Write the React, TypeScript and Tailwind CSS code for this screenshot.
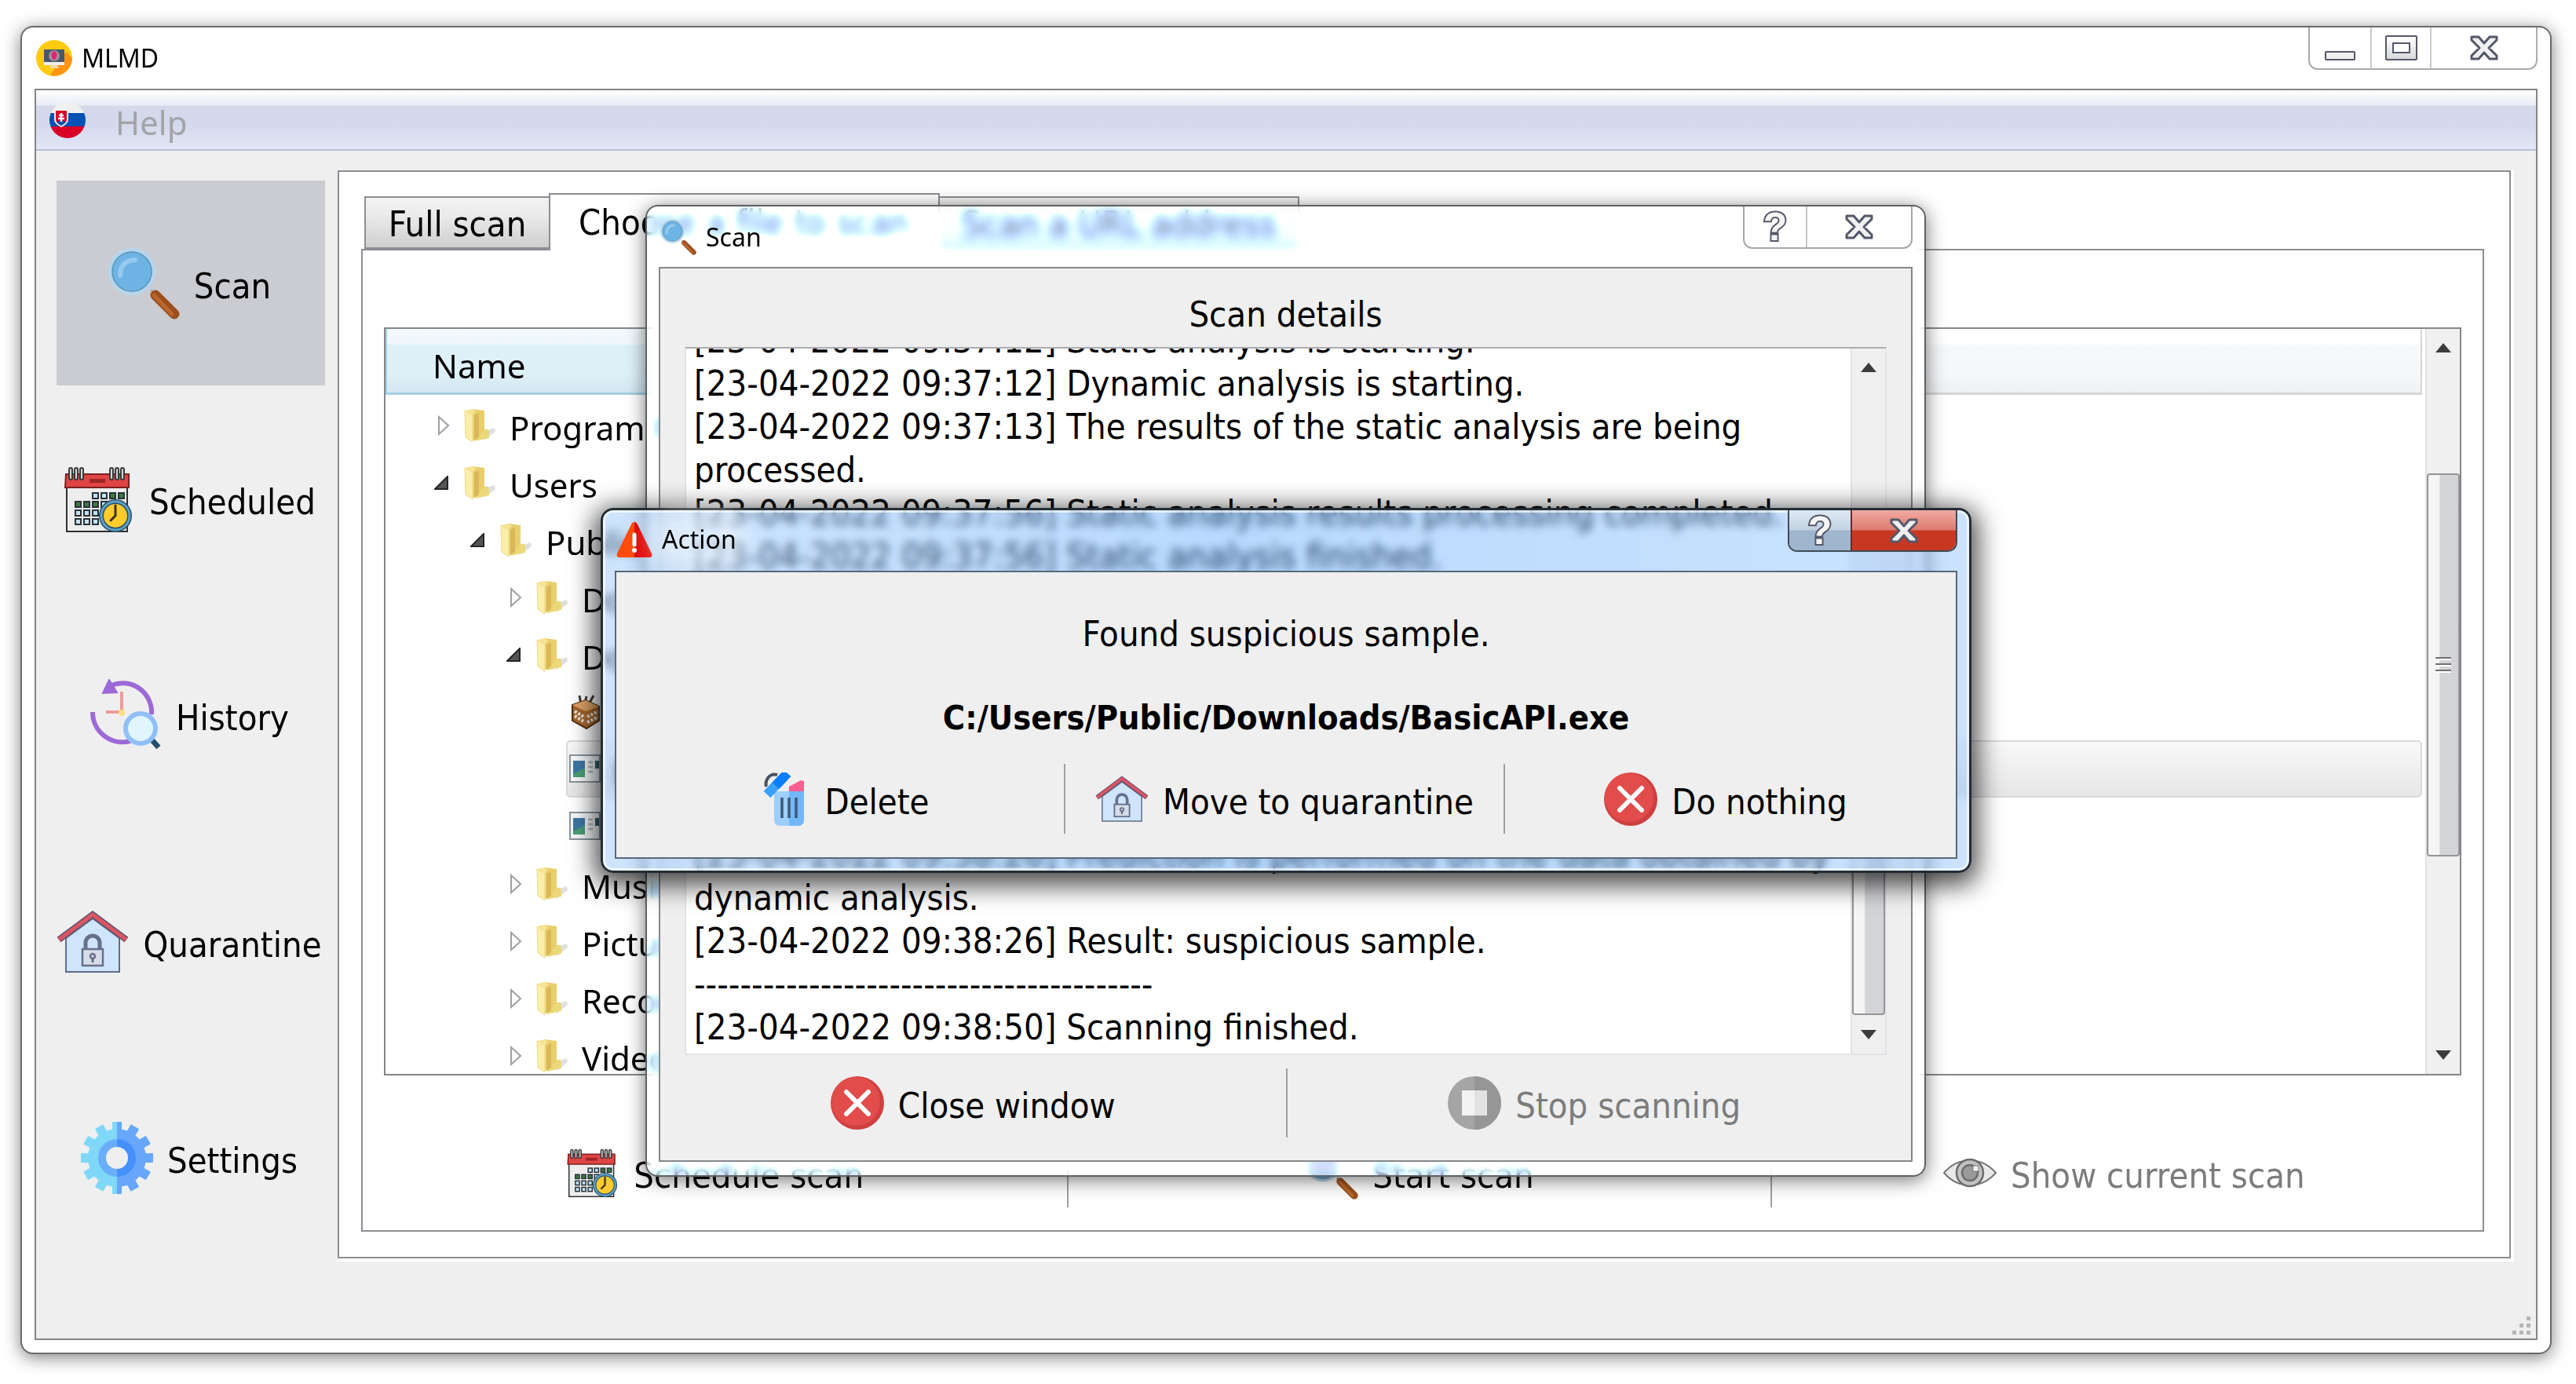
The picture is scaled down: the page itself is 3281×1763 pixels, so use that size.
import type { ReactNode } from 'react'
import clsx from 'clsx'

const TAHOMA = "font-['DejaVu_Sans_Condensed','Noto_Sans',sans-serif]"
const SEGOE = "font-['Noto_Sans','Open_Sans',sans-serif]"

type IconProps = { className?: string }

function MagnifierIcon({ className }: IconProps) {
  return (
    <svg viewBox="0 0 92 92" className={className} aria-hidden="true">
      <path d="M55 54l8 9" stroke="#a9b7c2" strokeWidth="4" />
      <path d="M61 61l24 24" stroke="#9c4f1c" strokeWidth="13" strokeLinecap="round" />
      <path d="M59 61l23 24" stroke="#b8682f" strokeWidth="5" strokeLinecap="round" />
      <circle cx="31" cy="31" r="28" fill="#6db4e4" stroke="#b7d6ea" strokeWidth="5" />
      <circle cx="31" cy="31" r="25" fill="none" stroke="#5d93b8" strokeWidth="1.5" />
      <path d="M16 36c0-12 6-19 19-20" stroke="#96c9ee" strokeWidth="6" fill="none" strokeLinecap="round" />
    </svg>
  )
}

function CalendarIcon({ className }: IconProps) {
  const cells = [
    [38, 38], [49, 38], [60, 38], [71, 38],
    [16, 49], [27, 49], [38, 49], [49, 49],
    [16, 60], [27, 60], [38, 60],
    [16, 71], [27, 71], [38, 71],
  ]
  return (
    <svg viewBox="0 0 92 92" className={className} aria-hidden="true">
      <rect x="5" y="24" width="77" height="63" fill="#ededed" stroke="#2e3032" strokeWidth="2" />
      <path d="M4 14h80v17H3z" fill="#e04545" stroke="#7d2020" strokeWidth="2" />
      <rect x="34" y="20" width="20" height="5" fill="#9d2626" />
      {[8, 15, 22, 60, 67, 74].map((x) => (
        <rect key={x} x={x} y="6" width="4" height="15" rx="2" fill="#d5d5d5" stroke="#3a3a3a" strokeWidth="2" />
      ))}
      {cells.map(([x, y], i) => (
        <rect
          key={i}
          x={x}
          y={y}
          width="7"
          height="7"
          fill={i === 2 || i === 3 || (i > 3 && i < 7) ? '#3f7a3f' : '#c4e3f5'}
          stroke="#27323a"
          strokeWidth="2"
        />
      ))}
      <circle cx="67" cy="67" r="18" fill="#ffcb2d" stroke="#274f66" strokeWidth="6" />
      <circle cx="67" cy="67" r="18" fill="none" stroke="#5da2c6" strokeWidth="3" />
      <path d="M67 54v13l-6 6" stroke="#3b3220" strokeWidth="3" fill="none" strokeLinecap="round" />
    </svg>
  )
}

function HistoryIcon({ className }: IconProps) {
  return (
    <svg viewBox="0 0 92 92" className={className} aria-hidden="true">
      <path d="M4 42a38 38 0 0 0 48 37" stroke="#9c69d6" strokeWidth="6" fill="none" />
      <path d="M28 8a37 37 0 0 1 51 37" stroke="#9c69d6" strokeWidth="6" fill="none" />
      <path d="M25 1l10 16-18 1z" fill="#9c69d6" stroke="#9c69d6" strokeWidth="2" />
      <path d="M41 16v26H21" stroke="#ef9a9a" strokeWidth="4" fill="none" />
      <circle cx="41" cy="43" r="4" fill="#ffe082" />
      <path d="M78 76l10 11" stroke="#24506e" strokeWidth="7" />
      <circle cx="65" cy="63" r="19" fill="#e1f5fe" stroke="#90bff9" strokeWidth="6" />
    </svg>
  )
}

function HouseLockIcon({ className }: IconProps) {
  return (
    <svg viewBox="0 0 92 92" className={className} aria-hidden="true">
      <path d="M12 41L46 16l34 25v43H12z" fill="#cfe5fc" stroke="#5f6c8c" strokeWidth="2" />
      <path d="M3 43L46 11l43 32" fill="none" stroke="#5f5573" strokeWidth="8" />
      <path d="M3 43L46 11l43 32" fill="none" stroke="#dd5562" strokeWidth="5" />
      <path d="M37 56V47a9 9 0 0 1 18 0v9" fill="none" stroke="#66708c" strokeWidth="5" />
      <rect x="33" y="55" width="26" height="21" fill="#d7dde6" stroke="#66708c" strokeWidth="2.5" />
      <circle cx="46" cy="64" r="3" fill="none" stroke="#66708c" strokeWidth="2.5" />
      <path d="M46 66v6" stroke="#66708c" strokeWidth="3" />
    </svg>
  )
}

function GearIcon({ className }: IconProps) {
  const teeth = [0, 30, 60, 90, 120, 150]
  return (
    <svg viewBox="0 0 92 92" className={className} aria-hidden="true">
      <defs>
        <clipPath id="gear-left"><path d="M0 0h46v92H0z" /></clipPath>
        <clipPath id="gear-right"><path d="M46 0h46v92H46z" /></clipPath>
      </defs>
      {[
        { clip: 'url(#gear-left)', outer: '#80d8f8', ring: '#6aaefb' },
        { clip: 'url(#gear-right)', outer: '#66a6fb', ring: '#4590fb' },
      ].map(({ clip, outer, ring }) => (
        <g key={clip} clipPath={clip}>
          {teeth.map((angle) => (
            <rect key={angle} x="40" y="0" width="12" height="92" rx="1" fill={outer} transform={`rotate(${angle} 46 46)`} />
          ))}
          <circle cx="46" cy="46" r="37" fill={outer} />
          <circle cx="46" cy="46" r="24" fill={ring} />
        </g>
      ))}
      <circle cx="46" cy="46" r="14" fill="#efefef" />
    </svg>
  )
}

function CrossIcon({ className }: IconProps) {
  return (
    <svg viewBox="0 0 68 68" className={className} aria-hidden="true">
      <circle cx="34" cy="34" r="34" fill="#d03f40" />
      <circle cx="32" cy="32" r="31" fill="#e24c4b" />
      <path d="M20 20l28 28M48 20L20 48" stroke="#fff" strokeWidth="6" strokeLinecap="round" />
    </svg>
  )
}

function StopIcon({ className }: IconProps) {
  return (
    <svg viewBox="0 0 68 68" className={className} aria-hidden="true">
      <circle cx="34" cy="34" r="34" fill="#a5a5a5" />
      <path d="M34 0a34 34 0 0 1 0 68z" fill="#969696" />
      <path d="M18 18h16v32H18z" fill="#f3f3f3" />
      <path d="M34 18h16v32H34z" fill="#e2e2e2" />
    </svg>
  )
}

function TrashIcon({ className }: IconProps) {
  return (
    <svg viewBox="0 0 68 68" className={className} aria-hidden="true">
      <path d="M41 24V18l15-8 4 1v14z" fill="#ff5d93" />
      <path d="M22 24h38v37a7 7 0 0 1-7 7H29a7 7 0 0 1-7-7z" fill="#9dcffd" />
      <path d="M41 24h19v37a7 7 0 0 1-7 7H41z" fill="#73b7fb" />
      <path d="M32 32v26M41 32v26M50 32v26" stroke="#3d5a75" strokeWidth="3.5" />
      <path d="M12 18c-2-8 4-18 14-15" fill="none" stroke="#47535e" strokeWidth="4" />
      <path d="M13 28L35 5" stroke="#3ba0fb" strokeWidth="12" />
      <path d="M24 17L39 1" stroke="#0a7dfa" strokeWidth="12" />
    </svg>
  )
}

function EyeIcon({ className }: IconProps) {
  return (
    <svg viewBox="0 0 68 68" className={className} aria-hidden="true">
      <path d="M1 34c18-21 48-21 66 0-18 21-48 21-66 0z" fill="#e9e9e9" stroke="#777" strokeWidth="2" />
      <circle cx="34" cy="34" r="17" fill="#c2c2c2" stroke="#6d6d6d" strokeWidth="2.5" />
      <circle cx="34" cy="34" r="10" fill="#9a9a9a" stroke="#6d6d6d" strokeWidth="2.5" />
      <rect x="38" y="25" width="7" height="7" fill="#f5f5f5" stroke="#777" />
    </svg>
  )
}

function WarningIcon({ className }: IconProps) {
  return (
    <svg viewBox="0 0 46 46" className={className} aria-hidden="true">
      <path d="M23 1c2 0 3 1 4 3l18 37c1 3 0 5-3 5H23z" fill="#e00b0b" />
      <path d="M23 1c-2 0-3 1-4 3L1 41c-1 3 0 5 3 5h19z" fill="#ff4b0a" />
      <path d="M23 17v13" stroke="#fff" strokeWidth="5" strokeLinecap="round" />
      <circle cx="23" cy="37" r="3" fill="#fff" />
    </svg>
  )
}

function AppLogo({ className }: IconProps) {
  return (
    <svg viewBox="0 0 46 46" className={className} aria-hidden="true">
      <circle cx="23" cy="23" r="23" fill="#ffcb0c" />
      <path d="M46 23a23 23 0 0 1-28 22l20-30z" fill="#ff9510" />
      <rect x="10" y="12" width="26" height="16" fill="#46586b" />
      <rect x="10" y="28" width="26" height="4" fill="#f2efe9" />
      <path d="M19 32h8l2 4H17z" fill="#f5d9a0" />
      <ellipse cx="23" cy="20" rx="7" ry="7" fill="#9f8f96" />
      <path d="M23 14c5 1 4 9 0 12-4-3-5-11 0-12z" fill="#e8217d" />
    </svg>
  )
}

function SlovakFlag({ className }: IconProps) {
  return (
    <svg viewBox="0 0 46 46" className={className} aria-hidden="true">
      <defs><clipPath id="flag"><circle cx="23" cy="23" r="23" /></clipPath></defs>
      <g clipPath="url(#flag)">
        <path d="M0 0h46v14H0z" fill="#f0f0f0" />
        <path d="M0 14h46v17H0z" fill="#0052b4" />
        <path d="M0 31h46v15H0z" fill="#d80027" />
        <path d="M6 11h18v11c0 5-5 8-9 10-4-2-9-5-9-10z" fill="#f0f0f0" />
        <path d="M8 11h14v11c0 4-4 6-7 8-3-2-7-4-7-8z" fill="#d80027" />
        <path d="M9 26c2-3 10-3 12 0l-6 4z" fill="#0052b4" />
        <path d="M15 14v11M11 21h8M12 17h6" stroke="#f0f0f0" strokeWidth="2.5" />
      </g>
    </svg>
  )
}

function FolderIcon() {
  return (
    <svg viewBox="0 0 44 44" className="size-11" aria-hidden="true">
      <path d="M24 30l17-5 1 5-14 11z" fill="#000" opacity=".12" />
      <path d="M13 1l15 2v34l-15 4z" fill="#e9cf6c" />
      <path d="M28 27c5-1 6 1 6 5v6l-19 4z" fill="#ecd878" />
      <path d="M3 3l10 6v34L4 37z" fill="#fbedaa" stroke="#eedb88" />
      <path d="M3 3l10-2 4 3-4 5z" fill="#f6e394" />
      <path d="M15 9l6-3v31l-6 4z" fill="#cfa94a" opacity=".6" />
    </svg>
  )
}

function ProgramIcon() {
  return (
    <svg viewBox="0 0 44 44" className="size-11" aria-hidden="true">
      <rect x="5" y="4" width="38" height="34" fill="#f7f9fa" stroke="#8b959c" strokeWidth="2" />
      <rect x="9" y="11" width="15" height="21" fill="#4aa079" />
      <path d="M9 11h15v9L9 28z" fill="#3e78a8" />
      <path d="M28 13h6M28 19h6M28 25h6" stroke="#b8bec2" strokeWidth="3" />
      <path d="M37 11h5v10h-5z" fill="#35626f" />
    </svg>
  )
}

function PackageIcon() {
  return (
    <svg viewBox="0 0 44 44" className="size-11" aria-hidden="true">
      <path d="M19 12L17 1M24 10l2-8M30 10l5-9" stroke="#3e3a36" strokeWidth="3" />
      <path d="M8 13l17-6 17 8v18L26 43 8 33z" fill="#a5672d" stroke="#4d3014" strokeWidth="2" />
      <path d="M8 13l17 8 17-6-17-8z" fill="#e0a368" />
      <path d="M11 21l13 8M11 27l13 8M27 28l14-7M27 35l14-7" stroke="#e8e3dc" strokeWidth="4" strokeDasharray="3 2" />
    </svg>
  )
}

function CloseGlyph() {
  return (
    <svg viewBox="0 0 36 32" className="h-8 w-9" aria-hidden="true">
      <path
        d="M2 2h9l7 8 7-8h9v4L24 16l10 10v4h-9l-7-8-7 8H2v-4l10-10L2 6z"
        fill="#f0f0f1"
        stroke="#55586a"
        strokeWidth="3"
        strokeLinejoin="round"
      />
    </svg>
  )
}

function Arrow({ down = false }: { down?: boolean }) {
  return (
    <svg viewBox="0 0 20 12" className="h-3 w-5" aria-hidden="true">
      <path d={down ? 'M0 0h20L10 12z' : 'M10 0l10 12H0z'} fill="#3c3c3c" />
    </svg>
  )
}

function ScrollBar({ thumbClass, grip = false }: { thumbClass: string; grip?: boolean }) {
  return (
    <div className="flex w-11 shrink-0 flex-col items-center justify-between border-l-2 border-[#e3e3e5] bg-[#f0f0f0] py-[18px]">
      <Arrow />
      <div
        className={clsx(
          'flex w-full flex-col items-center justify-center gap-1 rounded-sm border-2 border-[#949494] bg-linear-to-r from-[#f5f5f5] from-35% to-[#d3d4d8] to-40%',
          thumbClass,
        )}
      >
        {grip && [0, 1, 2].map((i) => <span key={i} className="h-1 w-5 border-t-2 border-[#6f6f6f] bg-white" />)}
      </div>
      <Arrow down />
    </div>
  )
}

function HelpButton({ className }: { className: string }) {
  return (
    <button aria-label="Help" className={clsx('flex w-20 items-center justify-center border-r-2', className)}>
      <span className="font-['Liberation_Sans',sans-serif] text-[50px] leading-none font-bold text-[#f4f4f4] [-webkit-text-stroke:4px_#55586a] [paint-order:stroke_fill]">?</span>
    </button>
  )
}

function IconButton({ icon, label, disabled = false }: { icon: ReactNode; label: string; disabled?: boolean }) {
  return (
    <button
      disabled={disabled}
      className={clsx('flex items-center justify-center gap-[18px] text-[45px] leading-[54px]', disabled ? 'text-[#7c7c7c]' : 'text-black')}
    >
      {icon}
      <span className="pt-2 whitespace-nowrap">{label}</span>
    </button>
  )
}

function SideButton({ icon, label, active = false }: { icon: ReactNode; label: string; active?: boolean }) {
  return (
    <button className={clsx('flex h-[261px] items-center justify-center gap-[18px] pr-1 text-[45px] leading-[54px]', active && 'bg-[#cbccd1]')}>
      {icon}
      <span className="pt-2">{label}</span>
    </button>
  )
}

type Node = { label: string; indent: string; icon: 'folder' | 'program' | 'package'; state?: 'open' | 'closed'; selected?: boolean }

const TREE: Node[] = [
  { label: 'Program Files', indent: 'pl-[62px]', icon: 'folder', state: 'closed' },
  { label: 'Users', indent: 'pl-[62px]', icon: 'folder', state: 'open' },
  { label: 'Public', indent: 'pl-[108px]', icon: 'folder', state: 'open' },
  { label: 'Documents', indent: 'pl-[154px]', icon: 'folder', state: 'closed' },
  { label: 'Downloads', indent: 'pl-[154px]', icon: 'folder', state: 'open' },
  { label: '', indent: 'pl-[194px]', icon: 'package' },
  { label: 'BasicAPI.exe', indent: 'pl-[194px]', icon: 'program', selected: true },
  { label: '', indent: 'pl-[194px]', icon: 'program' },
  { label: 'Music', indent: 'pl-[154px]', icon: 'folder', state: 'closed' },
  { label: 'Pictures', indent: 'pl-[154px]', icon: 'folder', state: 'closed' },
  { label: 'Recorded', indent: 'pl-[154px]', icon: 'folder', state: 'closed' },
  { label: 'Videos', indent: 'pl-[154px]', icon: 'folder', state: 'closed' },
]

function TreeRow({ node }: { node: Node }) {
  return (
    <li className={clsx('flex h-[73px] shrink-0 items-center', node.indent)}>
      <span className="flex w-9 shrink-0">
        {node.state === 'closed' && (
          <svg viewBox="0 0 20 26" className="ml-1 h-[26px] w-5" aria-hidden="true">
            <path d="M2 2v22l12-11z" fill="#fff" stroke="#a0a0a0" strokeWidth="2" />
          </svg>
        )}
        {node.state === 'open' && (
          <svg viewBox="0 0 18 18" className="size-[18px]" aria-hidden="true">
            <path d="M17 1v16H1z" fill="#555" stroke="#262626" strokeWidth="2" />
          </svg>
        )}
      </span>
      <span
        className={clsx(
          'flex h-full items-center gap-4',
          node.selected && 'flex-1 rounded-md bg-linear-to-b from-[#f9f9f9] to-[#e6e6e6] outline-2 -outline-offset-2 outline-[#d9d9d9]',
        )}
      >
        {node.icon === 'folder' && <FolderIcon />}
        {node.icon === 'program' && <ProgramIcon />}
        {node.icon === 'package' && <PackageIcon />}
        <span className="pt-1.5">{node.label}</span>
      </span>
    </li>
  )
}

const LOG_TOP = [
  '[23-04-2022 09:37:12] Static analysis is starting.',
  '[23-04-2022 09:37:12] Dynamic analysis is starting.',
  '[23-04-2022 09:37:13] The results of the static analysis are being',
  'processed.',
  '[23-04-2022 09:37:56] Static analysis results processing completed.',
  '[23-04-2022 09:37:56] Static analysis finished.',
]

const LOG_BOTTOM = [
  '[23-04-2022 09:38:26] Prediction is performed on the data obtained by',
  'dynamic analysis.',
  '[23-04-2022 09:38:26] Result: suspicious sample.',
  '----------------------------------------',
  '[23-04-2022 09:38:50] Scanning finished.',
]

function ScanDialog() {
  return (
    <section
      aria-label="Scan"
      className="absolute top-[261px] right-[828px] bottom-[264px] left-[822px] flex flex-col rounded-2xl border-2 border-[#5d6265] bg-white/30 px-[15px] pb-[17px] shadow-[0_4px_24px_rgba(0,0,0,0.55)] [backdrop-filter:blur(7px)_sepia(0.8)_hue-rotate(175deg)_saturate(1.6)_brightness(1.04)]"
    >
      <header className={clsx('flex h-[77px] shrink-0 items-start', SEGOE)}>
        <div className="flex flex-1 items-center gap-3 pt-4 pl-0.5">
          <MagnifierIcon className="size-[46px]" />
          <span className="text-[32px] leading-[46px]">Scan</span>
        </div>
        <div className="flex h-[54px] rounded-b-xl border-2 border-t-0 border-[#a5a8ab] bg-white/80">
          <HelpButton className="border-[#c4c6c8]" />
          <button aria-label="Close" className="flex w-[132px] items-center justify-center"><CloseGlyph /></button>
        </div>
      </header>
      <div className="flex min-h-0 flex-1 flex-col border-2 border-[#85888b] bg-[#efefef]">
        <h2 className="pt-8 text-center text-[45px] leading-[54px]">Scan details</h2>
        <div className="mx-[31px] mt-3.5 flex min-h-0 flex-1 border-2 border-[#e2e3ea] border-t-[#abadb3] bg-white">
          <div className="-mt-[38px] flex flex-1 flex-col justify-between overflow-hidden pb-1.5 pl-2.5 text-[45px] leading-[55px] [clip-path:inset(38px_0_0_0)]">
            {[LOG_TOP, LOG_BOTTOM].map((lines) => (
              <div key={lines[0]}>
                {lines.map((line) => <p key={line} className="whitespace-nowrap">{line}</p>)}
              </div>
            ))}
          </div>
          <ScrollBar thumbClass="mt-auto mb-[19px] h-[420px]" />
        </div>
        <div className="grid h-[134px] shrink-0 grid-cols-2 pt-[17px] pb-[29px]">
          <IconButton icon={<CrossIcon className="size-[68px]" />} label="Close window" />
          <div className="flex justify-center border-l-2 border-[#a0a0a0] pr-3">
            <IconButton icon={<StopIcon className="size-[68px]" />} label="Stop scanning" disabled />
          </div>
        </div>
      </div>
    </section>
  )
}

function ActionDialog() {
  return (
    <section
      aria-label="Action"
      className="absolute top-[647px] right-[770px] bottom-[651px] left-[765px] flex flex-col rounded-2xl border-[3px] border-[#232d36] bg-linear-to-r from-[#94c5fd]/45 via-[#4ea2fd]/40 via-45% to-[#7db8fd]/40 px-[15px] pb-[15px] shadow-[0_8px_32px_8px_rgba(0,0,0,0.7),inset_0_0_0_3px_rgba(255,255,255,0.65)] backdrop-blur-[6px]"
    >
      <header className={clsx('flex h-[77px] shrink-0 items-start', SEGOE)}>
        <div className="flex flex-1 items-center gap-3 pt-3.5 pl-0.5">
          <WarningIcon className="size-[46px]" />
          <span className="rounded-full bg-white/40 text-[32px] leading-[46px] shadow-[0_0_24px_16px_rgba(255,255,255,0.4)]">Action</span>
        </div>
        <div className="flex h-[53px] overflow-hidden rounded-b-xl border-2 border-t-0 border-[#3f4b57]">
          <HelpButton className="border-[#6b2a26] bg-linear-to-b from-[#dfe9f3] from-0% via-[#c3d2e2] via-48% to-[#9fb6ce] to-52%" />
          <button
            aria-label="Close"
            className="flex w-[132px] items-center justify-center bg-linear-to-b from-[#f0aaa2] via-[#dd7c70] via-48% to-[#c73822] to-52%"
          >
            <CloseGlyph />
          </button>
        </div>
      </header>
      <div className="flex flex-1 flex-col border-2 border-[#56697c] bg-[#efefef] text-center">
        <p className="pt-[52px] text-[45px] leading-[54px]">Found suspicious sample.</p>
        <p className="pt-[52px] text-[43px] leading-[54px] font-bold">C:/Users/Public/Downloads/BasicAPI.exe</p>
        <div className="mt-8 grid h-[89px] grid-cols-3 pr-3 pl-2">
          <IconButton icon={<TrashIcon className="size-[68px]" />} label="Delete" />
          <div className="flex justify-center border-x-2 border-[#a0a0a0]">
            <IconButton icon={<HouseLockIcon className="size-[68px]" />} label="Move to quarantine" />
          </div>
          <IconButton icon={<CrossIcon className="size-[68px]" />} label="Do nothing" />
        </div>
      </div>
    </section>
  )
}

function Tabs() {
  return (
    <div className="flex h-[72px] items-end pl-1 text-[45px] leading-[54px]">
      <button className="h-[67px] w-[237px] border-2 border-[#8c8e94] bg-linear-to-b from-[#f2f2f2] via-[#ebebeb] via-34% to-[#cfcfcf] to-100% pt-1">Full scan</button>
      <button className="relative -mb-0.5 -ml-0.5 h-[73px] w-[498px] border-2 border-b-0 border-[#8c8e94] bg-white">Choose a file to scan</button>
      <button className="-ml-0.5 h-[67px] w-[460px] border-2 border-[#8c8e94] bg-linear-to-b from-[#f2f2f2] via-[#ebebeb] via-34% to-[#cfcfcf] to-100% pt-1">Scan a URL address</button>
    </div>
  )
}

export default function App() {
  return (
    <main className={clsx('relative flex h-screen overflow-hidden bg-white pt-[33px] pr-[31px] pb-[38px] pl-[26px] text-black', TAHOMA)}>
      <div className="flex min-w-0 flex-1 flex-col rounded-2xl border-2 border-[#6b6b6b] bg-white px-4 pb-4 shadow-[0_4px_22px_rgba(0,0,0,0.5)]">
        <header className={clsx('flex h-[78px] shrink-0 items-start', SEGOE)}>
          <div className="flex flex-1 items-center gap-3 pt-4 pl-0.5">
            <AppLogo className="size-[46px]" />
            <h1 className="text-[32px] leading-[46px]">MLMD</h1>
          </div>
          <div className="flex h-[54px] rounded-b-xl border-2 border-t-0 border-[#a9abae]">
            <button aria-label="Minimize" className="flex w-[79px] items-end justify-center border-r-2 border-[#c9cbcd] pb-2.5">
              <span className="h-3 w-[39px] rounded-xs border-2 border-[#55586a] bg-[#f0f0f0]" />
            </button>
            <button aria-label="Maximize" className="flex w-[76px] items-end justify-center border-r-2 border-[#c9cbcd] pb-2.5">
              <span className="flex h-8 w-[41px] items-center justify-center rounded-xs border-2 border-[#55586a] bg-linear-to-b from-white to-[#d8d9dc]">
                <span className="h-[14px] w-[23px] border-2 border-[#55586a] bg-white" />
              </span>
            </button>
            <button aria-label="Close" className="flex w-[133px] items-center justify-center"><CloseGlyph /></button>
          </div>
        </header>

        <div className="flex min-h-0 flex-1 flex-col border-2 border-[#858585] bg-[#efefef]">
          <nav className={clsx('flex h-[77px] shrink-0 items-center border-b-2 border-[#b9bfd6] bg-linear-[180deg,#fff_0%,#e8ecf6_25%,#d3d8eb_27%,#d4d9ec_60%,#e2e7f7_100%] pl-[17px]', SEGOE)}>
            <button aria-label="Slovenčina"><SlovakFlag className="size-[46px]" /></button>
            <button className="pt-1.5 pl-[38px] text-[42px] leading-[54px] text-[#a2a4a8]">Help</button>
          </nav>

          <div className="flex min-h-0 flex-1">
            <aside className="mt-[38px] ml-[26px] flex h-[1375px] w-[342px] shrink-0 flex-col justify-between">
              <div className="flex flex-col gap-3.5">
                <SideButton icon={<MagnifierIcon className="size-[92px]" />} label="Scan" active />
                <SideButton icon={<CalendarIcon className="size-[92px]" />} label="Scheduled" />
                <SideButton icon={<HistoryIcon className="size-[92px]" />} label="History" />
              </div>
              <div className="flex flex-col gap-3.5">
                <SideButton icon={<HouseLockIcon className="size-[92px]" />} label="Quarantine" />
                <SideButton icon={<GearIcon className="size-[92px]" />} label="Settings" />
              </div>
            </aside>

            <div className="mt-[25px] mr-7 mb-[98px] ml-4 flex min-w-0 flex-1 border-r-4 border-b-4 border-white">
              <div className="flex min-w-0 flex-1 flex-col border-2 border-[#8c8e94] bg-white pt-[26px] pr-8 pb-8 pl-7">
                <Tabs />
                <div className="flex min-h-0 flex-1 flex-col border-2 border-[#8c8e94]">
                  <div className={clsx('mx-[27px] mt-[98px] flex min-h-0 flex-1 border-2 border-[#83878c] text-[42px] leading-[54px]', SEGOE)}>
                    <div className="flex min-w-0 flex-1 flex-col overflow-hidden">
                      <div className="flex h-[84px] shrink-0">
                        <div className="flex w-[1100px] items-center border-b-[3px] border-l-2 border-[#a5cfe2] bg-linear-[180deg,#f2f9fd_0%,#eef7fc_24%,#def1f9_25%,#def0f8_70%,#d3e8f2_100%] pt-3 pl-[58px]">Name</div>
                        <div className="mr-1 flex-1 border-r-2 border-b-[3px] border-[#d5d6d8] bg-linear-[180deg,#fff_24%,#f7f8fa_25%,#f6f7f9_70%,#eff0f2_100%]" />
                      </div>
                      <ul className="mr-1 flex flex-col pt-0.5">
                        {TREE.map((node, i) => <TreeRow key={i} node={node} />)}
                      </ul>
                    </div>
                    <ScrollBar thumbClass="mt-[154px] mb-auto h-[488px]" grip />
                  </div>
                  <div className="mt-[79px] mb-[29px] grid h-[89px] shrink-0 grid-cols-3 pr-2">
                    <IconButton icon={<CalendarIcon className="size-[68px]" />} label="Schedule scan" />
                    <div className="flex justify-center border-x-2 border-[#a0a0a0]">
                      <IconButton icon={<MagnifierIcon className="size-[68px]" />} label="Start scan" />
                    </div>
                    <IconButton icon={<EyeIcon className="size-[68px]" />} label="Show current scan" disabled />
                  </div>
                </div>
              </div>
            </div>
          </div>

          <svg viewBox="0 0 26 26" className="absolute right-[56px] bottom-[61px] size-[26px]" aria-hidden="true">
            {[[19, 1], [10, 10], [19, 10], [1, 19], [10, 19], [19, 19]].map(([x, y]) => (
              <rect key={`${x}-${y}`} x={x} y={y} width="5" height="5" fill="#b4b4b4" />
            ))}
          </svg>
        </div>
      </div>

      <ScanDialog />
      <ActionDialog />
    </main>
  )
}
